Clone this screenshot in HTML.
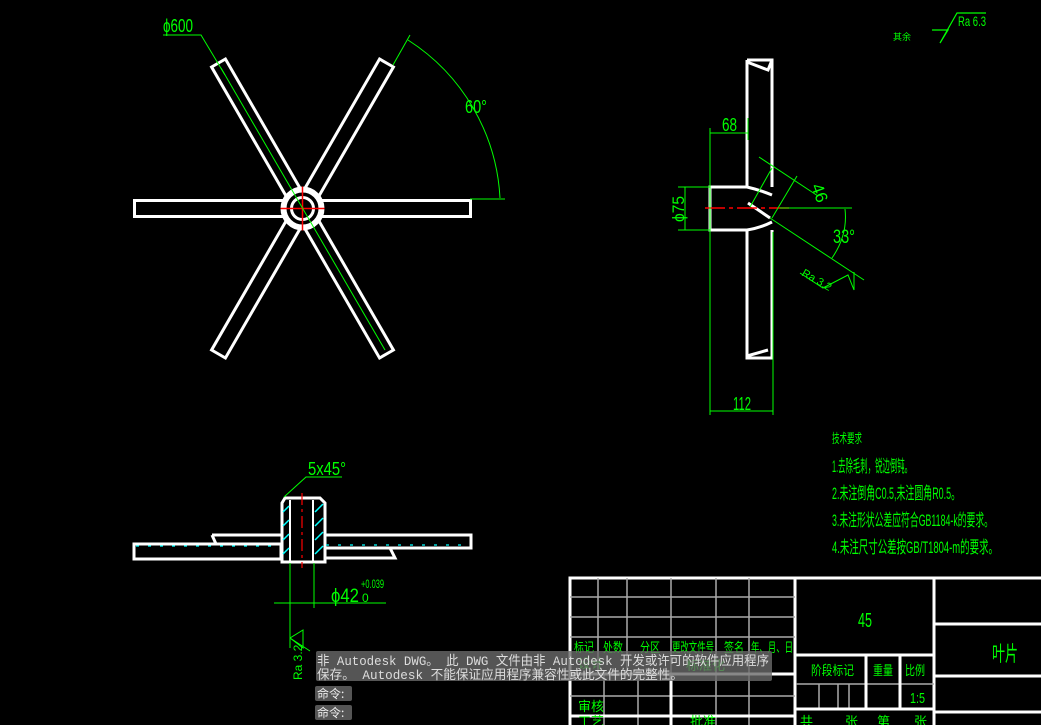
<!DOCTYPE html>
<html><head><meta charset="utf-8"><style>
html,body{margin:0;padding:0;background:#000;width:1041px;height:725px;overflow:hidden}
svg{display:block}
.g{fill:#00ff00;font-family:"Liberation Sans","Noto Sans CJK SC",sans-serif}
</style></head><body>
<svg width="1041" height="725" viewBox="0 0 1041 725" xmlns="http://www.w3.org/2000/svg">
<rect width="1041" height="725" fill="#000"/>
<g transform="translate(302.5,208.5)" stroke="#fff" stroke-width="3" fill="none">
  <rect x="-168" y="-8" width="336" height="16"/>
  <g transform="rotate(60)"><rect x="-168" y="-8" width="336" height="16"/></g>
  <g transform="rotate(-60)"><rect x="-168" y="-8" width="336" height="16"/></g>
  <circle r="19" fill="#000" stroke-width="6"/>
  <circle r="11" stroke-width="3"/>
  <line x1="-22" y1="0" x2="22" y2="0" stroke="#f00" stroke-width="1.5"/>
  <line x1="0" y1="-22" x2="0" y2="22" stroke="#f00" stroke-width="1.5"/>
</g>
<g stroke="#0f0" stroke-width="1" fill="none">
  <polyline points="163,35 201,35 225,75"/>
  <line x1="221" y1="68" x2="385" y2="350"/>
  <line x1="393" y1="65" x2="410" y2="35"/>
  <path d="M408,40 A200,200 0 0 1 500,198"/>
  <line x1="470" y1="199" x2="505" y2="199"/>
</g>
<text class="g" x="163" y="32" font-size="18" textLength="30" lengthAdjust="spacingAndGlyphs">ϕ600</text>
<text class="g" x="465" y="113" font-size="18" textLength="22" lengthAdjust="spacingAndGlyphs">60°</text>
<g stroke="#fff" stroke-width="3" fill="none">
  <path d="M747,60 L772,60 L772,187"/>
  <path d="M747,60 L747,187 L710,187 L710,230 L747,230 L747,358 L772,358 L772,230"/>
  <path d="M747,62 L768,70 L772,60"/>
  <path d="M747,356 L768,350"/>
  <path d="M747,187 Q760,190 772,195"/>
  <path d="M747,230 Q760,228 772,222"/>
  <path d="M748,203 L770,218"/>
</g>
<line x1="705" y1="208" x2="790" y2="208" stroke="#f00" stroke-width="1.5" stroke-dasharray="20,4,4,4"/>
<g stroke="#0f0" stroke-width="1" fill="none">
  <line x1="710" y1="128" x2="710" y2="415"/><line x1="748" y1="118" x2="748" y2="140"/>
  <line x1="710" y1="133" x2="748" y2="133"/>
  <line x1="773" y1="232" x2="773" y2="415"/><line x1="710" y1="411" x2="773" y2="411"/>
  <line x1="678" y1="187" x2="710" y2="187"/><line x1="678" y1="230" x2="710" y2="230"/><line x1="685" y1="187" x2="685" y2="230"/>
  <line x1="759" y1="157" x2="818" y2="196"/><line x1="750" y1="207" x2="772" y2="168"/><line x1="772" y1="218" x2="797" y2="176"/>
  <line x1="780" y1="208" x2="852" y2="208"/>
  <line x1="770" y1="218" x2="864" y2="280"/>
  <path d="M845,209 Q848,235 832,258"/>
  <polyline points="800,273 823,288 848,275 854,290 854,272"/>
</g>
<text class="g" x="722" y="131" font-size="18" textLength="15" lengthAdjust="spacingAndGlyphs">68</text>
<text class="g" transform="translate(811,186) rotate(70)" font-size="17">46</text>
<text class="g" x="833" y="243" font-size="19" textLength="22" lengthAdjust="spacingAndGlyphs">33°</text>
<text class="g" transform="translate(684,222) rotate(-90)" font-size="17" textLength="26" lengthAdjust="spacingAndGlyphs">ϕ75</text>
<text class="g" transform="translate(801,275) rotate(30)" font-size="11">Ra 3.2</text>
<text class="g" x="733" y="410" font-size="18" textLength="18" lengthAdjust="spacingAndGlyphs">112</text>
<g stroke="#0f0" stroke-width="1.2" fill="none"><polyline points="932,30 948,30 940,43 957,13 986,13"/></g>
<text class="g" x="958" y="26" font-size="14" textLength="28" lengthAdjust="spacingAndGlyphs">Ra 6.3</text>
<text class="g" x="893" y="40" font-size="9">其余</text>
<g stroke="#fff" stroke-width="3" fill="none">
  <path d="M134,544 L281,544 L281,559 L134,559 Z"/>
  <path d="M212,535 L281,535 M212,535 L216,544"/>
  <path d="M324,535 L471,535 L471,548 L324,548"/>
  <path d="M324,548 L390,548 L395,558 L324,558"/>
  <path d="M285,498 L320,498 L325,503 L325,562 L282,562 L282,503 Z"/>
  <line x1="290" y1="500" x2="290" y2="561" stroke-width="2"/><line x1="313" y1="500" x2="313" y2="561" stroke-width="2"/>
</g>
<g stroke="#0ff" stroke-width="1.2" stroke-dasharray="3,9"><line x1="136" y1="546" x2="280" y2="546"/><line x1="326" y1="545" x2="469" y2="545"/></g>
<g stroke="#0ff" stroke-width="1.5"><path d="M283,512 l6,-6 M283,526 l6,-6 M283,540 l6,-6 M283,554 l6,-6 M315,512 l8,-8 M315,526 l8,-8 M315,540 l8,-8 M315,554 l8,-8"/></g>
<line x1="302" y1="493" x2="302" y2="568" stroke="#f00" stroke-width="1.2" stroke-dasharray="12,4,3,4"/>
<g stroke="#0f0" stroke-width="1" fill="none">
  <polyline points="284,497 306,477 342,477"/>
  <line x1="290" y1="563" x2="290" y2="648"/><line x1="314" y1="563" x2="314" y2="608"/>
  <line x1="274" y1="603" x2="386" y2="603"/>
  <polyline points="290,638 303,630 303,648 290,638 310,651"/>
</g>
<text class="g" x="308" y="475" font-size="18" textLength="38" lengthAdjust="spacingAndGlyphs">5x45°</text>
<text class="g" x="331" y="602" font-size="19" textLength="28" lengthAdjust="spacingAndGlyphs">ϕ42</text>
<text class="g" x="361" y="588" font-size="12" textLength="23" lengthAdjust="spacingAndGlyphs">+0.039</text>
<text class="g" x="362" y="602" font-size="12">0</text>
<text class="g" transform="translate(302,680) rotate(-90)" font-size="12">Ra 3.2</text>
<g class="g" font-size="17">
<text x="832" y="443" font-size="13" textLength="30" lengthAdjust="spacingAndGlyphs">技术要求</text>
<text x="832" y="472" textLength="80" lengthAdjust="spacingAndGlyphs">1.去除毛刺，锐边倒钝。</text>
<text x="832" y="499" textLength="128" lengthAdjust="spacingAndGlyphs">2.未注倒角C0.5,未注圆角R0.5。</text>
<text x="832" y="526" textLength="161" lengthAdjust="spacingAndGlyphs">3.未注形状公差应符合GB1184-k的要求。</text>
<text x="832" y="553" textLength="166" lengthAdjust="spacingAndGlyphs">4.未注尺寸公差按GB/T1804-m的要求。</text>
</g>
<g stroke="#fff" fill="none">
  <rect x="570" y="578" width="475" height="150" stroke-width="3"/>
  <line x1="795" y1="578" x2="795" y2="725" stroke-width="3"/>
  <line x1="934" y1="578" x2="934" y2="725" stroke-width="3"/>
  <g stroke="#aaa" stroke-width="1.5">
    <line x1="570" y1="597" x2="795" y2="597"/><line x1="570" y1="617" x2="795" y2="617"/><line x1="570" y1="637" x2="795" y2="637"/>
    <line x1="598" y1="578" x2="598" y2="674"/><line x1="627" y1="578" x2="627" y2="674"/><line x1="671" y1="578" x2="671" y2="674"/><line x1="716" y1="578" x2="716" y2="725"/><line x1="749" y1="578" x2="749" y2="725"/>
    <line x1="604" y1="674" x2="604" y2="725"/><line x1="638" y1="674" x2="638" y2="725"/>
    <line x1="570" y1="696" x2="795" y2="696"/>
    <line x1="819" y1="684" x2="819" y2="708"/><line x1="838" y1="684" x2="838" y2="708"/><line x1="849" y1="684" x2="849" y2="708"/><line x1="796" y1="684" x2="900" y2="684"/><line x1="900" y1="684" x2="934" y2="684"/>
  </g>
  <g stroke-width="3">
    <line x1="570" y1="674" x2="795" y2="674"/><line x1="570" y1="716" x2="795" y2="716"/><line x1="671" y1="674" x2="671" y2="725"/>
    <line x1="795" y1="655" x2="934" y2="655"/><line x1="795" y1="709" x2="934" y2="709"/>
    <line x1="866" y1="655" x2="866" y2="709"/><line x1="900" y1="655" x2="900" y2="709"/>
    <line x1="934" y1="624" x2="1041" y2="624"/><line x1="934" y1="676" x2="1041" y2="676"/><line x1="934" y1="712" x2="1041" y2="712"/>
  </g>
</g>
<g class="g" font-size="13">
  <text x="574" y="652" textLength="20" lengthAdjust="spacingAndGlyphs">标记</text><text x="603" y="652" textLength="20" lengthAdjust="spacingAndGlyphs">处数</text><text x="640" y="652" textLength="20" lengthAdjust="spacingAndGlyphs">分区</text><text x="672" y="652" textLength="42" lengthAdjust="spacingAndGlyphs">更改文件号</text><text x="724" y="652" textLength="20" lengthAdjust="spacingAndGlyphs">签名</text><text x="751" y="652" textLength="42" lengthAdjust="spacingAndGlyphs">年、月、日</text>
  <text x="578" y="668">设计</text><text x="686" y="670">标准化</text>
  <text x="578" y="711">审核</text><text x="578" y="726">工艺</text><text x="690" y="726">批准</text>
  <text x="811" y="675" textLength="43" lengthAdjust="spacingAndGlyphs">阶段标记</text><text x="873" y="675" textLength="20" lengthAdjust="spacingAndGlyphs">重量</text><text x="905" y="675" textLength="20" lengthAdjust="spacingAndGlyphs">比例</text>
  <text x="910" y="703" font-size="15" textLength="15" lengthAdjust="spacingAndGlyphs">1:5</text>
  <text x="800" y="726">共</text><text x="845" y="726">张</text><text x="877" y="726">第</text><text x="914" y="726">张</text>
  <text x="858" y="627" font-size="20" textLength="14" lengthAdjust="spacingAndGlyphs">45</text>
  <text x="992" y="661" font-size="21" textLength="26" lengthAdjust="spacingAndGlyphs">叶片</text>
</g>
<rect x="316" y="651" width="456" height="30" fill="#6a6a6a" fill-opacity="0.8" rx="2"/>
<g fill="#ddd" font-family="Liberation Mono,'Noto Sans CJK SC',monospace" font-size="13">
  <text x="317" y="665" textLength="452" lengthAdjust="spacingAndGlyphs">非 Autodesk DWG。 此 DWG 文件由非 Autodesk 开发或许可的软件应用程序</text>
  <text x="317" y="679" textLength="366" lengthAdjust="spacingAndGlyphs">保存。 Autodesk 不能保证应用程序兼容性或此文件的完整性。</text>
</g>
<rect x="315" y="686" width="37" height="15" fill="#555" rx="2"/>
<rect x="315" y="705" width="37" height="15" fill="#555" rx="2"/>
<g fill="#eee" font-family="'Noto Sans CJK SC',sans-serif" font-size="12"><text x="317" y="698">命令:</text><text x="317" y="717">命令:</text></g>
</svg>
</body></html>
